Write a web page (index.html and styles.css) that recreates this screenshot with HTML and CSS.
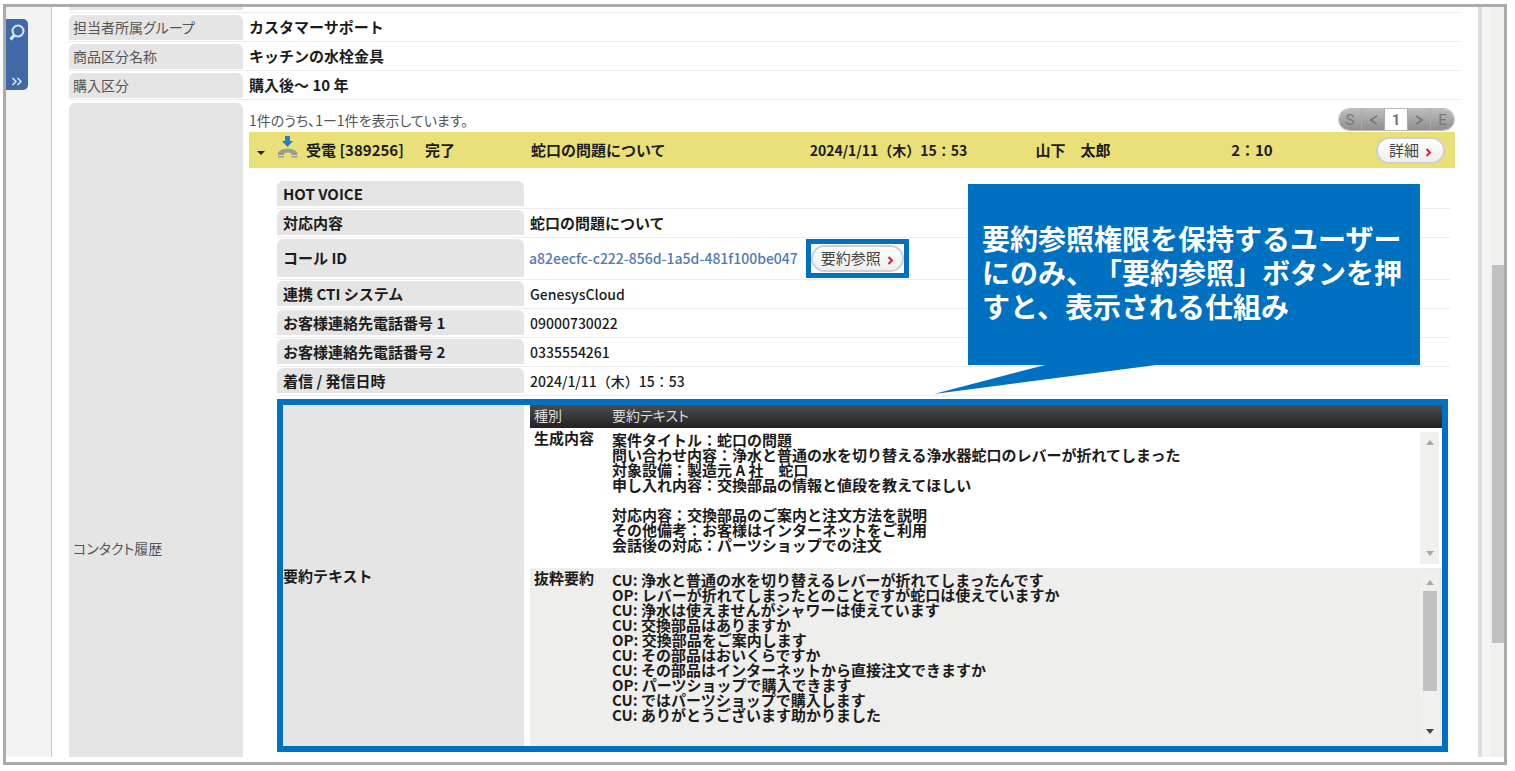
FILE: index.html
```html
<!DOCTYPE html>
<html lang="ja">
<head>
<meta charset="utf-8">
<title>コンタクト履歴</title>
<link rel="stylesheet" href="styles.css">
</head>
<body>
<div class="frame">
  <aside class="side">
    <button class="side-tab" type="button" aria-label="検索を開く">
      <svg width="18" height="20" viewBox="0 0 18 20" fill="none" stroke="#dfe8f6" stroke-width="2"><circle cx="10" cy="8" r="5.5"/><path d="M6 12.500L2.500 16.500" stroke-width="3"/></svg>
      <svg width="12" height="9" viewBox="0 0 12 9" fill="none" stroke="#dfe8f6" stroke-width="1.500"><path d="M1.500 1L5 4.500L1.500 8M6.500 1L10 4.500L6.500 8"/></svg>
    </button>
  </aside>
  <main class="main">
    <dl class="fields">
      <div class="field field-cut"><dt></dt><dd></dd></div>
      <div class="field"><dt>担当者所属グループ</dt><dd>カスタマーサポート</dd></div>
      <div class="field"><dt>商品区分名称</dt><dd>キッチンの水栓金具</dd></div>
      <div class="field"><dt>購入区分</dt><dd>購入後～ 10 年</dd></div>
      <div class="field field-history">
        <dt>コンタクト履歴</dt>
        <dd>
          <div class="list-head">
            <p class="count">1件のうち、1ー1件を表示しています。</p>
            <nav class="pager" aria-label="ページ">
              <button type="button">S</button>
              <button type="button" aria-label="前へ"><svg width="9" height="10" viewBox="0 0 9 10" fill="none" stroke="#777" stroke-width="1.500"><path d="M8 1L1.500 5L8 9"/></svg></button>
              <button type="button" class="current">1</button>
              <button type="button" aria-label="次へ"><svg width="9" height="10" viewBox="0 0 9 10" fill="none" stroke="#777" stroke-width="1.500"><path d="M1 1L7.500 5L1 9"/></svg></button>
              <button type="button">E</button>
            </nav>
          </div>
          <div class="contact">
            <span class="caret"></span>
            <svg class="call-icon" width="22" height="24" viewBox="0 0 22 24"><path fill="#1f7fd0" d="M8 0h5v5h3l-5.500 6L5 5h3z"/><path fill="#9b9a90" d="M1 18c0-7 19-7 19.500 0v3.500h-6V17.500c-2-1.200-5-1.200-7.500 0v4H1z"/><path stroke="#e9e07a" d="M1 19.500h6m7.500 0h6"/></svg>
            <span>受電 [389256]</span>
            <span>完了</span>
            <span>蛇口の問題について</span>
            <span class="latin">2024/1/11（木）15：53</span>
            <span>山下　太郎</span>
            <span>2：10</span>
            <button class="pill" type="button">詳細<svg width="7" height="9" viewBox="0 0 7 9" fill="none" stroke="#d0203f" stroke-width="2"><path d="M1.500 1L5 4.500L1.500 8"/></svg></button>
          </div>
          <dl class="details">
            <div class="detail"><dt>HOT VOICE</dt><dd></dd></div>
            <div class="detail"><dt>対応内容</dt><dd>蛇口の問題について</dd></div>
            <div class="detail detail-call"><dt>コール ID</dt><dd><a class="latin" href="#call">a82eecfc-c222-856d-1a5d-481f100be047</a><span class="marked"><button class="pill" type="button">要約参照<svg width="7" height="9" viewBox="0 0 7 9" fill="none" stroke="#d0203f" stroke-width="2"><path d="M1.500 1L5 4.500L1.500 8"/></svg></button></span></dd></div>
            <div class="detail"><dt>連携 CTI システム</dt><dd class="latin">GenesysCloud</dd></div>
            <div class="detail"><dt>お客様連絡先電話番号 1</dt><dd class="latin">09000730022</dd></div>
            <div class="detail"><dt>お客様連絡先電話番号 2</dt><dd class="latin">0335554261</dd></div>
            <div class="detail"><dt>着信 / 発信日時</dt><dd class="latin">2024/1/11（木）15：53</dd></div>
            <div class="summary">
              <dt>要約テキスト</dt>
              <dd>
                <table>
                  <thead><tr><th class="kind">種別</th><th>要約テキスト</th></tr></thead>
                  <tbody>
                    <tr>
                      <th class="kind" scope="row"><label for="generated">生成内容</label></th>
                      <td><div class="text-pane"><textarea id="generated" class="short" readonly>案件タイトル：蛇口の問題
問い合わせ内容：浄水と普通の水を切り替える浄水器蛇口のレバーが折れてしまった
対象設備：製造元 A 社　蛇口
申し入れ内容：交換部品の情報と値段を教えてほしい

対応内容：交換部品のご案内と注文方法を説明
その他備考：お客様はインターネットをご利用
会話後の対応：パーツショップでの注文</textarea><span class="bar"><i class="up"></i><i class="down"></i></span></div></td>
                    </tr>
                    <tr class="alt">
                      <th class="kind" scope="row"><label for="excerpt">抜粋要約</label></th>
                      <td><div class="text-pane"><textarea id="excerpt" class="tall" readonly>CU: 浄水と普通の水を切り替えるレバーが折れてしまったんです
OP: レバーが折れてしまったとのことですが蛇口は使えていますか
CU: 浄水は使えませんがシャワーは使えています
CU: 交換部品はありますか
OP: 交換部品をご案内します
CU: その部品はおいくらですか
CU: その部品はインターネットから直接注文できますか
OP: パーツショップで購入できます
CU: ではパーツショップで購入します
CU: ありがとうございます助かりました</textarea><span class="bar"><i class="up"></i><b class="thumb"></b><i class="down active"></i></span></div></td>
                    </tr>
                  </tbody>
                </table>
              </dd>
            </div>
          </dl>
          <div class="callout">
            <p>要約参照権限を保持するユーザーにのみ、「要約参照」ボタンを押すと、表示される仕組み</p>
            <svg class="tail" width="222" height="31" viewBox="0 0 222 31"><path fill="#0070c0" d="M115 0H222V1L0 30z"/></svg>
          </div>
        </dd>
      </div>
    </dl>
  </main>
  <div class="gutter"></div>
  <div class="page-scroll"><span></span></div>
</div>
</body>
</html>
```
FILE: styles.css
```css
* { box-sizing: border-box; }

body {
  margin: 0;
  padding: 4px 8px 6px 3px;
  background: #fff;
  color: #1c1c1c;
  font: 500 15px/20px "Noto Sans CJK JP", sans-serif;
  text-spacing-trim: space-all;
}

dl, dd, p { margin: 0; }
button, textarea { font: inherit; color: inherit; }

.frame {
  display: flex;
  border: 3px solid #aeaaaa;
  padding-bottom: 5px;
}

/* Side strip */
.side {
  flex: none;
  width: 46px;
  padding-top: 12px;
  background: #f3f3f3;
  border-right: 1px solid #c9c9c9;
}
.side-tab {
  display: flex;
  flex-direction: column;
  align-items: center;
  justify-content: space-between;
  width: 22px;
  height: 71px;
  padding: 4px 0;
  border: 0;
  border-radius: 0 5px 5px 0;
  background: #4169a8;
}

/* Record fields */
.main {
  flex: 1;
  min-width: 0;
  padding: 0 17px;
}
.field {
  display: flex;
  padding: 2px 0 1px;
  border-bottom: 1px solid #ececec;
}
.field > dt {
  flex: none;
  width: 174px;
  min-height: 25px;
  padding: 2px 4px 0;
  border-radius: 6px 6px 0 0;
  background: #e5e5e5;
  color: #555;
  font-size: 14px;
  font-weight: 400;
  font-feature-settings: "palt";
}
.field > dd {
  flex: 1;
  min-width: 0;
  padding: 2px 6px 0;
  font-weight: 700;
}
.field-cut { padding-top: 0; padding-bottom: 2px; }
.field-cut > dt { min-height: 3px; padding: 0; border-radius: 0; }
.field-cut > dd { padding: 0; }
.field-history {
  position: relative;
  padding: 3px 0 0;
  border: 0;
}
.field-history > dt {
  display: flex;
  align-items: center;
  padding-top: 236px;
}

/* Contact list */
.list-head {
  display: flex;
  justify-content: space-between;
  align-items: center;
  height: 27px;
  padding-top: 2px;
}
.count {
  color: #555;
  font-size: 14px;
  font-weight: 400;
  font-feature-settings: "palt";
}
.pager {
  display: flex;
  overflow: hidden;
  border: 1px solid #bbb;
  border-radius: 12px;
}
.pager button {
  width: 23px;
  height: 21px;
  padding: 0;
  border: 0;
  border-right: 1px solid #aaa;
  background: linear-gradient(#bdbdbd, #8f8f8f);
  color: #777;
  font: 15px/20px Roboto, sans-serif;
}
.pager button:last-child { border-right: 0; }
.pager .current { background: #fff; font-weight: 700; }

.contact {
  display: grid;
  grid-template-columns: 20px 29px 119px 106px 279fr 226fr 196fr 145fr auto;
  align-items: center;
  height: 36px;
  padding: 0 10px 0 8px;
  background: #e9e07a;
  white-space: nowrap;
}
.caret {
  width: 8px;
  margin-top: 6px;
  border: 4px solid transparent;
  border-top-color: #222;
  border-bottom: 0;
}
.call-icon { margin-bottom: 4px; }
.latin { font-size: 14px; }

.pill {
  display: flex;
  align-items: center;
  gap: 6px;
  height: 27px;
  padding: 0 11px;
  border: 2px solid #cfcfcf;
  border-radius: 14px;
  background: linear-gradient(#fff, #eee);
  color: #444;
  font-weight: 400;
  line-height: 20px;
}
.pill svg { margin-top: 4px; }

/* Contact details */
.details { padding: 12px 5px 0 28px; }
.detail {
  display: flex;
  height: 29px;
  padding: 1px 0 2px;
  border-bottom: 1px solid #ececec;
}
.detail dt, .summary > dt {
  display: flex;
  flex: none;
  align-items: center;
  width: 247px;
  padding-left: 6px;
  border-radius: 6px 6px 0 0;
  background: #e5e5e5;
}
.detail dd {
  display: flex;
  flex: 1;
  align-items: center;
  padding-left: 6px;
}
.detail dd.latin { font-weight: 500; }
.detail-call { height: 42px; }
.detail-call dd { padding-left: 5px; }
.detail a {
  color: #5079b5;
  font-weight: 500;
  text-decoration: none;
}
.marked {
  flex: none;
  margin-left: 8px;
  border: 5px solid #0070c0;
  padding: 1px 0;
}
.marked .pill { padding: 0 8px; }

/* Highlighted summary */
.summary {
  display: flex;
  margin: 3px 2px 5px 0;
  border: 6px solid #0070c0;
}
.summary > dt {
  width: 241px;
  padding-left: 0;
  border-radius: 0;
}
.summary > dd { flex: 1; min-width: 0; padding-left: 6px; }
.summary table {
  width: 100%;
  border-collapse: collapse;
}
.summary th, .summary td {
  padding: 0;
  text-align: left;
  vertical-align: top;
}
.summary thead th {
  height: 23px;
  background: linear-gradient(#4c4c4c, #222);
  color: #ddd;
  font-size: 14px;
  font-weight: 400;
  font-feature-settings: "palt";
}
.summary thead th + th { padding-left: 4px; }
.summary .kind { width: 78px; padding-left: 4px; }
.summary tbody .kind { line-height: 20px; }
.summary .alt { background: #eeeeec; }
.text-pane {
  display: flex;
  padding: 4px 3px 4px 4px;
}
.text-pane textarea {
  display: block;
  flex: 1;
  min-width: 0;
  padding: 0;
  border: 0;
  outline: 0;
  background: transparent;
  resize: none;
  overflow: hidden;
  font-weight: 700;
  line-height: 15px;
}
.text-pane .short { height: 132px; }
.text-pane .tall { height: 170px; }
.bar {
  display: flex;
  flex-direction: column;
  align-items: center;
  flex: none;
  width: 19px;
  padding: 8px 0;
  background: #f0f0ef;
}
.bar i { border: 4px solid transparent; }
.bar .up { border-top: 0; border-bottom: 5px solid #a8a8a8; }
.bar .down { margin-top: auto; border-bottom: 0; border-top: 5px solid #a8a8a8; }
.bar .active { border-top-color: #444; }
.thumb { width: 14px; height: 100px; margin-top: 6px; background: #c1c1c1; }

/* Explanation balloon */
.callout {
  position: absolute;
  top: 84px;
  right: 41px;
  width: 452px;
  height: 181px;
  padding: 37px 16px 0 14px;
  background: #0070c0;
  color: #fff;
  font-size: 28px;
  font-weight: 700;
  line-height: 34px;
}
.tail {
  position: absolute;
  top: 180px;
  left: -34px;
}

/* Page edge */
.gutter {
  flex: none;
  width: 12px;
  border-left: 4px solid #ddd;
  background: #f5f5f5;
}
.page-scroll {
  flex: none;
  width: 14px;
  padding: 258px 0 0 2px;
  background: #f0f0ee;
}
.page-scroll span {
  display: block;
  height: 378px;
  background: #c1c1c1;
}
```
